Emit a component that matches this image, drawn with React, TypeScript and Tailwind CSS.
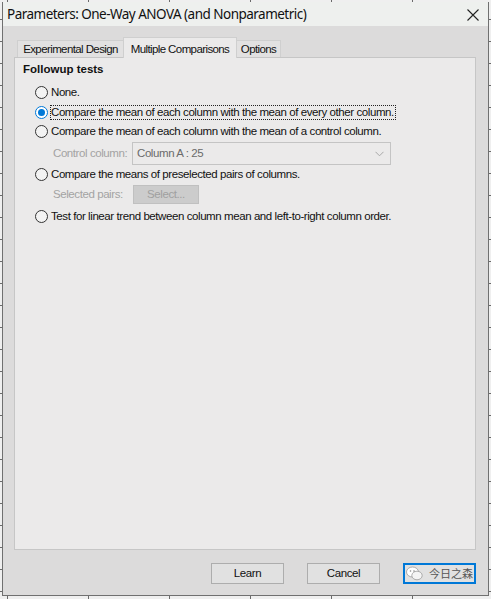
import React from "react";

function Radio({ checked }: { checked?: boolean }) {
  if (checked) {
    return (
      <span className="w-[13px] h-[13px] rounded-full border border-[#0078d7] bg-white flex items-center justify-center shrink-0">
        <span className="w-[7px] h-[7px] rounded-full bg-[#0078d7]" />
      </span>
    );
  }
  return <span className="w-[13px] h-[13px] rounded-full border border-[#333333] bg-[#f3f3f3] shrink-0" />;
}

function RadioRow({ label, checked, focus, h }: { label: string; checked?: boolean; focus?: boolean; h: string }) {
  return (
    <div className={`flex items-center ml-[20px] gap-[2px] ${h}`}>
      <Radio checked={checked} />
      <span
        className={`border leading-[13px] pr-[1px] ${focus ? "border-dotted border-[#222]" : "border-transparent"}`}
      >
        {label}
      </span>
    </div>
  );
}

function WinButton({ children }: { children: React.ReactNode }) {
  return (
    <div className="w-[73px] h-[21px] bg-[#e1e1e1] border border-[#adadad] flex items-center justify-center text-[#111]">
      {children}
    </div>
  );
}

export default function App() {
  return (
    <div
      className="relative w-[491px] h-[599px] overflow-hidden bg-[#efefef] bg-[linear-gradient(to_right,#6a6a6a_1px,transparent_1px),linear-gradient(to_bottom,#6a6a6a_1px,transparent_1px)] [background-size:81px_22px] [background-position:7px_19px]"
      style={{ fontFamily: '"Liberation Sans", Arial, sans-serif' }}
    >
      <div className="ml-[2px] mt-[2px] w-[487px] h-[594px] flex flex-col border-l border-r border-b border-[#707070] bg-[#dcdbdb]">
        {/* Title bar */}
        <div className="h-[24px] bg-[#eef0ee] flex items-center justify-between pl-[4px] pr-[9px] shrink-0">
          <span
            className="text-[13.5px] text-[#111] tracking-[-0.52px]"
            style={{ fontFamily: '"Segoe UI", "Noto Sans", sans-serif' }}
          >
            Parameters: One-Way ANOVA (and Nonparametric)
          </span>
          <svg width="12" height="12" viewBox="0 0 12 12" className="mt-[1px]">
            <path d="M0.5 0.5 L11.5 11.5 M11.5 0.5 L0.5 11.5" stroke="#222" strokeWidth="1.1" fill="none" />
          </svg>
        </div>

        {/* Body */}
        <div className="flex-1 flex flex-col pl-[11px] pr-[12px] pt-[11px]">
          {/* Tabs */}
          <div className="flex items-end h-[20px] pl-[3px] text-[11.5px] tracking-[-0.6px] text-[#111]">
            <div className="w-[106px] h-[17px] border-t border-l border-[#cfcfcf] bg-[#e2e1e1] flex items-center justify-center pt-[1px]">
              Experimental Design
            </div>
            <div className="relative z-10 w-[114px] h-[21px] -mb-px border-t border-l border-r border-[#cfcfcf] bg-[#ebeaea] flex items-start justify-center pt-[3px]">
              Multiple Comparisons
            </div>
            <div className="w-[44px] h-[17px] border-t border-r border-[#cfcfcf] bg-[#e2e1e1] flex items-center justify-center pt-[1px]">
              Options
            </div>
          </div>

          {/* Panel */}
          <div className="h-[493px] border border-[#c6c6c6] bg-[#ebeaea] flex flex-col text-[11.5px] tracking-[-0.42px] text-[#111]">
            <div className="h-[24px] flex items-center ml-[8px] font-bold tracking-normal">Followup tests</div>
            <RadioRow h="h-[20px]" label="None." />
            <RadioRow h="h-[20px]" checked focus label="Compare the mean of each column with the mean of every other column." />
            <RadioRow h="h-[19px]" label="Compare the mean of each column with the mean of a control column." />
            <div className="h-[25px] flex items-center ml-[38px]">
              <span className="w-[79px] text-[#a3a3a3]">Control column:</span>
              <div className="w-[259px] h-[23px] border border-[#c4c4c4] bg-[#ebeaea] flex items-center justify-between pl-[4px] pr-[6px] text-[#6a6a6a]">
                <span>Column A : 25</span>
                <svg width="9" height="6" viewBox="0 0 9 6">
                  <path d="M0.5 0.8 L4.5 4.8 L8.5 0.8" stroke="#a8a8a8" strokeWidth="1" fill="none" />
                </svg>
              </div>
            </div>
            <RadioRow h="h-[17px]" label="Compare the means of preselected pairs of columns." />
            <div className="h-[23px] flex items-center ml-[38px]">
              <span className="w-[80px] text-[#a3a3a3]">Selected pairs:</span>
              <div className="w-[66px] h-[19px] bg-[#cccccc] border border-[#c0c0c0] flex items-center justify-center text-[#a0a0a0]">
                Select...
              </div>
            </div>
            <RadioRow h="h-[21px]" label="Test for linear trend between column mean and left-to-right column order." />
          </div>

          {/* Buttons */}
          <div className="mt-[13px] flex justify-end gap-[23px] text-[11.5px] tracking-[-0.42px]">
            <WinButton>Learn</WinButton>
            <WinButton>Cancel</WinButton>
            <div className="w-[73px] h-[21px] bg-[#e1e1e1] border-2 border-[#0078d7] flex items-center pl-[1px] gap-[6px] overflow-hidden whitespace-nowrap">
              <svg width="17" height="15" viewBox="0 0 17 15" className="shrink-0">
                <ellipse cx="6.5" cy="6" rx="6" ry="5" fill="#ffffff" stroke="#9a9a9a" strokeWidth="0.8" />
                <ellipse cx="11" cy="9.5" rx="5.2" ry="4.3" fill="#f4f4f4" stroke="#9a9a9a" strokeWidth="0.8" />
                <circle cx="4.5" cy="5" r="0.8" fill="#888" />
                <circle cx="8" cy="5" r="0.8" fill="#888" />
              </svg>
              <span
                className="text-[11px] text-[#555] tracking-[0px] leading-none"
                style={{ fontFamily: '"Noto Sans CJK SC", sans-serif' }}
              >
                今日之森
              </span>
            </div>
          </div>
        </div>
      </div>
    </div>
  );
}
